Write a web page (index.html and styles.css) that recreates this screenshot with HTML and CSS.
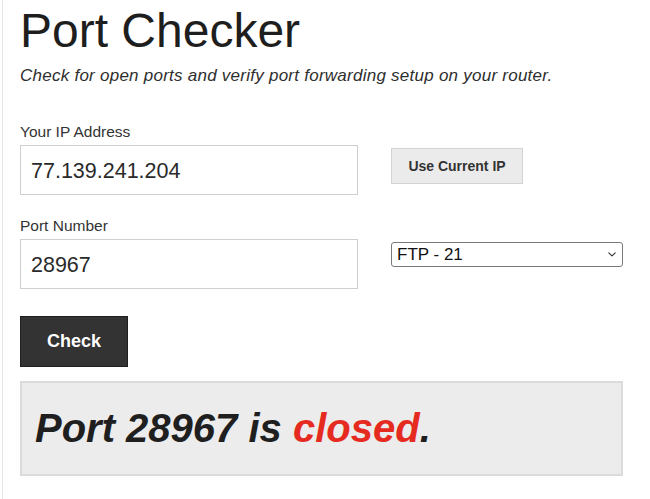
FILE: index.html
```html
<!DOCTYPE html>
<html lang="en">
<head>
<meta charset="utf-8">
<title>Port Checker</title>
<link rel="stylesheet" href="styles.css">
</head>
<body>
<div class="page">
  <h1 class="title">Port Checker</h1>
  <p class="subtitle">Check for open ports and verify port forwarding setup on your router.</p>

  <div class="field field-ip">
    <label class="label" for="ip">Your IP Address</label>
    <div class="row">
      <input class="text-input" id="ip" type="text" value="77.139.241.204">
      <button class="btn-secondary" type="button">Use Current IP</button>
    </div>
  </div>

  <div class="field field-port">
    <label class="label" for="port">Port Number</label>
    <div class="row">
      <input class="text-input" id="port" type="text" value="28967">
      <div class="select-wrap">
        <select class="port-select">
          <option>FTP - 21</option>
          <option>SSH - 22</option>
          <option>HTTP - 80</option>
        </select>
        <svg class="select-arrow" width="8" height="5" viewBox="0 0 8 5" aria-hidden="true">
          <path d="M0.8 0.8 L4 3.9 L7.2 0.8" fill="none" stroke="#333333" stroke-width="1.1" stroke-linecap="round" stroke-linejoin="round"/>
        </svg>
      </div>
    </div>
  </div>

  <button class="btn-primary" type="button">Check</button>

  <div class="result">
    <h2 class="result-text">Port 28967 is <span class="status-closed">closed</span>.</h2>
  </div>
</div>
</body>
</html>
```

FILE: styles.css
```css
* {
  box-sizing: border-box;
}

html, body {
  margin: 0;
  padding: 0;
  background: #ffffff;
}

body {
  font-family: "Liberation Sans", Arial, Helvetica, sans-serif;
  color: #333333;
}

.page {
  margin-left: 2px;
  border-left: 1px solid #dfe7df;
  padding: 3px 0 0 17px;
  min-height: 100vh;
}

.title {
  margin: 0;
  font-size: 48px;
  line-height: 56px;
  font-weight: normal;
  color: #1e1e1e;
}

.subtitle {
  margin: 7px 0 0;
  font-size: 17px;
  line-height: 20px;
  font-style: italic;
  letter-spacing: 0.25px;
  color: #2e2e2e;
}

.field {
  display: flex;
  flex-direction: column;
  gap: 4px;
}

.field-ip {
  margin-top: 37px;
}

.field-port {
  margin-top: 22px;
}

.label {
  font-size: 15.5px;
  line-height: 18px;
  color: #333333;
}

.row {
  display: flex;
  align-items: flex-start;
  gap: 33px;
}

.text-input {
  width: 338px;
  height: 50px;
  margin: 0;
  padding: 2px 10px 0;
  border: 1px solid #cfcfcf;
  border-radius: 0;
  background: #ffffff;
  font-family: inherit;
  font-size: 21.5px;
  color: #2a2a2a;
  outline: none;
}

.btn-secondary {
  margin: 3px 0 0;
  width: 132px;
  height: 36px;
  padding: 0;
  border: 1px solid #d3d3d3;
  border-radius: 0;
  background: #ebebeb;
  font-family: inherit;
  font-size: 14px;
  font-weight: bold;
  color: #333333;
}

.select-wrap {
  position: relative;
  margin-top: 3px;
  width: 232px;
  height: 25px;
}

.port-select {
  display: block;
  width: 232px;
  height: 25px;
  margin: 0;
  padding: 0 20px 0 5px;
  border: 1px solid #7a7a7a;
  border-radius: 3px;
  background: #ffffff;
  -webkit-appearance: none;
  appearance: none;
  font-family: inherit;
  font-size: 17px;
  color: #111111;
}

.select-arrow {
  position: absolute;
  right: 7px;
  top: 10px;
  pointer-events: none;
}

.btn-primary {
  display: block;
  margin: 27px 0 0;
  width: 108px;
  height: 51px;
  padding: 0;
  border: 1px solid #1f1f1f;
  border-radius: 0;
  background: #333333;
  font-family: inherit;
  font-size: 18px;
  font-weight: bold;
  color: #ffffff;
}

.result {
  margin-top: 14px;
  width: 603px;
  height: 95px;
  padding: 22px 13px;
  border: 2px solid #dbdbdb;
  background: #ececec;
}

.result-text {
  margin: 0;
  font-size: 40px;
  line-height: 46px;
  font-weight: bold;
  font-style: italic;
  color: #1f1f1f;
}

.status-closed {
  color: #e52b1f;
}
```
